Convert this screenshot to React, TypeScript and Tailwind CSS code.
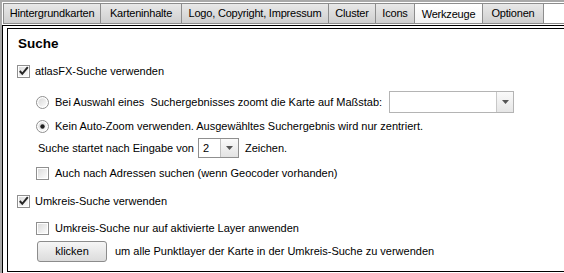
import type { ReactNode } from "react";

type Tab = { label: string; width: string; active?: boolean };

const TABS: Tab[] = [
  { label: "Hintergrundkarten", width: "w-[98px]" },
  { label: "Karteninhalte", width: "w-[82px]" },
  { label: "Logo, Copyright, Impressum", width: "w-[148px]" },
  { label: "Cluster", width: "w-[48px]" },
  { label: "Icons", width: "w-[40px]" },
  { label: "Werkzeuge", width: "w-[69px]", active: true },
  { label: "Optionen", width: "w-[62px]" },
];

function CheckBox({ checked }: { checked?: boolean }) {
  return (
    <svg width="13" height="13" viewBox="0 0 13 13" className="shrink-0">
      <defs>
        <linearGradient id="cbfill" x1="0" y1="0" x2="1" y2="1">
          <stop offset="0" stopColor="#dcdcdc" />
          <stop offset="1" stopColor="#fbfbfb" />
        </linearGradient>
      </defs>
      <rect x="0.5" y="0.5" width="12" height="12" fill="#fff" stroke="#8f8f8f" />
      <rect x="2" y="2" width="9" height="9" fill="url(#cbfill)" />
      {checked && (
        <path d="M2.8 6 L5.3 8.8 L10.8 2.2" fill="none" stroke="#262626" strokeWidth="2" />
      )}
    </svg>
  );
}

function Radio({ checked }: { checked?: boolean }) {
  return (
    <svg width="13" height="13" viewBox="0 0 13 13" className="shrink-0">
      <defs>
        <linearGradient id="rdfill" x1="0" y1="0" x2="1" y2="1">
          <stop offset="0" stopColor="#d8d8d8" />
          <stop offset="1" stopColor="#fcfcfc" />
        </linearGradient>
      </defs>
      <circle cx="6.5" cy="6.5" r="6" fill="#fff" stroke="#8f8f8f" />
      <circle cx="6.5" cy="6.5" r="4.2" fill="url(#rdfill)" />
      {checked && <circle cx="6.5" cy="6.5" r="2.2" fill="#1f1f1f" />}
    </svg>
  );
}

function Arrow() {
  return (
    <svg width="7" height="4" viewBox="0 0 7 4">
      <path d="M0 0 H7 L3.5 4 Z" fill="#555" />
    </svg>
  );
}

function Row({ children, className }: { children: ReactNode; className: string }) {
  return <div className={`flex items-center ${className}`}>{children}</div>;
}

export default function App() {
  return (
    <div className="w-[564px] h-[273px] overflow-hidden bg-[#a9a9a9] pl-[2px] pt-[2px] font-['Liberation_Sans',Arial,sans-serif] text-black">
      <div className="h-full bg-white flex flex-col">
        <div className="flex h-[22px] pt-[1px] pl-[1px] bg-white">
          {TABS.map((tab) => (
            <div
              key={tab.label}
              className={`${tab.width} h-[21px] -ml-px first:ml-0 border border-[#8d8d8d] flex items-center justify-center text-[11px] tracking-[-0.2px] ${
                tab.active
                  ? "bg-gradient-to-b from-white to-[#f2f2f2] pt-[2px]"
                  : "bg-gradient-to-b from-[#e8e8e8] to-[#cfcfcf]"
              }`}
            >
              {tab.label}
            </div>
          ))}
          <div className="flex-1 h-[21px] -ml-px border border-r-0 border-[#8d8d8d] bg-white" />
        </div>

        <div className="flex-1 border-t border-l border-black mt-[1px] pt-[2px] pl-[4px] pb-[1px]">
          <div className="h-full border-t border-l border-b border-black flex flex-col pl-[9px] text-[11px]">
            <div className="h-[26px] pt-[5px] pl-[1px] text-[13.5px] font-bold">Suche</div>

            <Row className="h-[16px] mt-[8px] gap-[5px]">
              <CheckBox checked />
              <span>atlasFX-Suche verwenden</span>
            </Row>

            <Row className="h-[22px] mt-[12px] pl-[19px] gap-[6px]">
              <Radio />
              <span className="whitespace-pre">Bei Auswahl eines  Suchergebnisses zoomt die Karte auf Maßstab:</span>
              <div className="ml-[1px] w-[125px] h-[22px] border border-[#b4b4b4] flex bg-white">
                <div className="flex-1" />
                <div className="w-[17px] border-l border-[#c8c8c8] bg-gradient-to-b from-[#fafafa] to-[#e6e6e6] flex items-center justify-center">
                  <Arrow />
                </div>
              </div>
            </Row>

            <Row className="h-[16px] mt-[5px] pl-[19px] gap-[6px]">
              <Radio checked />
              <span>Kein Auto-Zoom verwenden. Ausgewähltes Suchergebnis wird nur zentriert.</span>
            </Row>

            <Row className="h-[20px] mt-[4px] pl-[21px]">
              <span>Suche startet nach Eingabe von</span>
              <div className="ml-[4px] w-[41px] h-[20px] border border-[#8f8f8f] flex bg-white">
                <div className="w-[21px] pl-[4px] flex items-center">2</div>
                <div className="flex-1 border-l border-[#c0c0c0] bg-gradient-to-b from-[#fafafa] to-[#e3e3e3] flex items-center justify-center">
                  <Arrow />
                </div>
              </div>
              <span className="ml-[6px]">Zeichen.</span>
            </Row>

            <Row className="h-[16px] mt-[7px] pl-[19px] gap-[6px]">
              <CheckBox />
              <span>Auch nach Adressen suchen (wenn Geocoder vorhanden)</span>
            </Row>

            <Row className="h-[16px] mt-[12px] gap-[5px]">
              <CheckBox checked />
              <span>Umkreis-Suche verwenden</span>
            </Row>

            <Row className="h-[16px] mt-[11px] pl-[19px] gap-[6px]">
              <CheckBox />
              <span>Umkreis-Suche nur auf aktivierte Layer anwenden</span>
            </Row>

            <Row className="h-[21px] mt-[5px] pl-[20px]">
              <div className="w-[70px] h-[21px] rounded-[3px] border border-[#8c8c8c] bg-gradient-to-b from-[#f6f6f6] to-[#dcdcdc] flex items-center justify-center">
                klicken
              </div>
              <span className="ml-[8px]">um alle Punktlayer der Karte in der Umkreis-Suche zu verwenden</span>
            </Row>
          </div>
        </div>
      </div>
    </div>
  );
}
